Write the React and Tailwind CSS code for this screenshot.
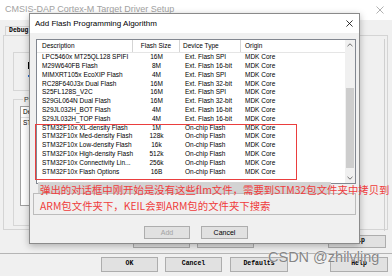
import React from 'react';

const algos = [
  ['LPC5460x MT25QL128 SPIFI', '16M', 'Ext. Flash SPI'],
  ['M29W640FB Flash', '8M', 'Ext. Flash 16-bit'],
  ['MIMXRT105x EcoXIP Flash', '4M', 'Ext. Flash SPI'],
  ['RC28F640J3x Dual Flash', '16M', 'Ext. Flash 32-bit'],
  ['S25FL128S_V2C', '16M', 'Ext. Flash SPI'],
  ['S29GL064N Dual Flash', '16M', 'Ext. Flash 32-bit'],
  ['S29JL032H_BOT Flash', '4M', 'Ext. Flash 16-bit'],
  ['S29JL032H_TOP Flash', '4M', 'Ext. Flash 16-bit'],
  ['STM32F10x XL-density Flash', '1M', 'On-chip Flash'],
  ['STM32F10x Med-density Flash', '128k', 'On-chip Flash'],
  ['STM32F10x Low-density Flash', '16k', 'On-chip Flash'],
  ['STM32F10x High-density Flash', '512k', 'On-chip Flash'],
  ['STM32F10x Connectivity Lin...', '256k', 'On-chip Flash'],
  ['STM32F10x Flash Options', '16B', 'On-chip Flash'],
];

function CloseX({ size = 8, color = '#000' }) {
  return (
    <svg width={size} height={size} viewBox="0 0 8 8">
      <path d="M0.5 0.5 L7.5 7.5 M7.5 0.5 L0.5 7.5" stroke={color} strokeWidth="0.9" fill="none" />
    </svg>
  );
}

function Chevron({ down }) {
  return (
    <svg width="6" height="4" viewBox="0 0 6 4">
      <path d={down ? 'M0.5 0.8 L3 3.2 L5.5 0.8' : 'M0.5 3.2 L3 0.8 L5.5 3.2'} stroke="#606060" strokeWidth="0.9" fill="none" />
    </svg>
  );
}

function WinButton({ w, children, muted, mono }) {
  return (
    <div
      className={`h-full ${w} shrink-0 border border-[#adadad] bg-[#e1e1e1] flex items-center justify-center leading-none ${
        mono ? "font-['Liberation_Mono',monospace] font-bold text-[6.5px]" : 'text-[7px]'
      } ${muted ? 'text-[#a3a3a3]' : 'text-black'}`}
    >
      {children}
    </div>
  );
}

// the driver setup window behind the dialog
function BackWindow() {
  return (
    <div className="h-[254px] border-b border-[#b5b5b5] flex flex-col">
      <div className="h-[20px] shrink-0 bg-white flex items-center justify-between pl-[5px] pr-[8px]">
        <span className="text-[9px] text-[#a3a3a3] whitespace-nowrap">CMSIS-DAP Cortex-M Target Driver Setup</span>
        <CloseX size={8} color="#a8a8a8" />
      </div>
      <div className="pl-[3px] pt-[6px]">
        <div className="flex h-[9px]">
          <div className="ml-[2px] w-[30px] border-t border-l border-r border-[#d4d4d4] flex items-center pl-[3px] font-['Liberation_Mono',monospace] font-bold text-[6.5px] leading-none">
            Debug
          </div>
        </div>
        <div className="w-[385px] h-[195px] border border-[#d4d4d4] pl-[9px] pt-[13px] flex">
          <div className="flex flex-col gap-[5px]">
            <fieldset className="w-[200px] h-[42px] border border-[#d6d6d6] pl-[14px] pt-[6px]">
              <legend className="ml-[3px] px-[1px] text-[7px] leading-none text-[#333]">Download Function</legend>
              <div className="w-[2px] h-[7px] bg-black" />
              <div className="w-[2px] h-[2px] bg-[#2a6fd6] mt-[6px]" />
            </fieldset>
            <fieldset className="w-[200px] h-[130px] border border-[#d6d6d6] pl-[6px] pt-[3px]">
              <legend className="ml-[3px] px-[1px] text-[7px] leading-none text-[#333]">Programming Algorithm</legend>
              <div className="w-[180px] h-[100px] border border-[#a0a0a0] bg-white">
                <div className="h-[11px] border-b border-[#e0e0e0] flex items-center pl-[2px] text-[6.5px] leading-none">
                  <span className="border-r border-[#e0e0e0] pr-[8px]">Description</span>
                </div>
                <div className="pl-[2px] pt-[2px] text-[6.5px] leading-none">STM32F10x Med-density Flash</div>
              </div>
            </fieldset>
          </div>
          <div className="ml-auto mr-[2px] mt-[-10px] w-[30px] h-[192px] border-r border-[#cfcfcf]" />
        </div>
        <div className="flex mt-[5px] h-[13px]">
          <div className="ml-[130px] flex gap-[7px] h-full">
            <WinButton w="w-[57px]" mono>OK</WinButton>
            <WinButton w="w-[57px]" mono>Cancel</WinButton>
          </div>
          <div className="ml-[74px] h-full">
            <WinButton w="w-[58px]" mono>Help</WinButton>
          </div>
        </div>
      </div>
    </div>
  );
}

function OptionsButtons() {
  return (
    <div className="flex pt-[3px] h-[18px]">
      <div className="ml-[101px] flex gap-[7px] h-[15px]">
        <WinButton w="w-[57px]" mono>OK</WinButton>
        <WinButton w="w-[57px]" mono>Cancel</WinButton>
      </div>
      <div className="ml-[8px] h-[15px]">
        <WinButton w="w-[58px]" mono>Defaults</WinButton>
      </div>
      <div className="ml-[42px] h-[15px]">
        <WinButton w="w-[58px]" mono>Help</WinButton>
      </div>
    </div>
  );
}

function FlashDialog() {
  return (
    <div className="absolute left-[29px] top-[13px] w-[331px] h-[231px] border border-[#8a8a8a] bg-[#f0f0f0] shadow-[0_2px_7px_rgba(0,0,0,0.28)] flex flex-col">
      <div className="h-[19px] shrink-0 bg-white flex items-center justify-between pl-[5px] pr-[6px]">
        <span className="text-[8px] leading-none whitespace-nowrap">Add Flash Programming Algorithm</span>
        <CloseX size={7} />
      </div>

      <div className="ml-[6px] mt-[6px] w-[320px] h-[145px] shrink-0 border border-[#828790] bg-white flex text-[6.5px] leading-none">
        <div className="flex-1 flex flex-col">
          <div className="h-[13px] flex border-b border-[#e5e5e5]">
            <div className="w-[96px] border-r border-[#d5d5d5] flex items-center pl-[5px]">Description</div>
            <div className="w-[47px] border-r border-[#d5d5d5] flex items-center justify-center">Flash Size</div>
            <div className="w-[61px] border-r border-[#d5d5d5] flex items-center pl-[3px]">Device Type</div>
            <div className="flex-1 flex items-center pl-[4px]">Origin</div>
          </div>
          {algos.map(([name, size, type]) => (
            <div key={name} className="h-[8.8px] flex items-center whitespace-nowrap">
              <div className="w-[96px] pl-[5px]">{name}</div>
              <div className="w-[47px] text-center">{size}</div>
              <div className="w-[61px] pl-[5px]">{type}</div>
              <div className="flex-1 pl-[4px]">MDK Core</div>
            </div>
          ))}
        </div>
        <div className="w-[10px] bg-[#f0f0f0] flex flex-col items-center">
          <div className="h-[10px] flex items-center">
            <Chevron />
          </div>
          <div className="h-[38px]" />
          <div className="w-[8px] h-[80px] bg-[#cdcdcd]" />
          <div className="flex-1" />
          <div className="h-[10px] flex items-center">
            <Chevron down />
          </div>
        </div>
      </div>

      <div className="ml-[3px] mt-[9px] w-[323px] h-[22px] shrink-0 border border-[#bcbcbc]" />

      <div className="ml-[114px] mt-[11px] h-[13px] flex gap-[11px]">
        <WinButton w="w-[46px]" muted>Add</WinButton>
        <WinButton w="w-[47px]">Cancel</WinButton>
      </div>
    </div>
  );
}

export default function App() {
  return (
    <div className="relative w-[392px] h-[276px] overflow-hidden bg-[#f0f0f0] font-['Liberation_Sans',sans-serif] text-black">
      <BackWindow />
      <OptionsButtons />
      <FlashDialog />

      {/* red annotation drawn over the screenshot */}
      <div className="absolute left-[35px] top-[124px] w-[262px] h-[56px] border-[1.5px] border-[#ea3e3e]" />
      <div className="absolute left-[38px] top-[182px] w-[293px] h-[11px] bg-[#d3d3d3]" />
      <div className="absolute left-[40px] top-[182px] text-[10.4px] leading-[16px] text-[#ef3b3b] whitespace-nowrap font-['Noto_Sans_CJK_SC',sans-serif]">
        <div>弹出的对话框中刚开始是没有这些flm文件，需要到STM32包文件夹中拷贝到</div>
        <div>ARM包文件夹下，KEIL会到ARM包的文件夹下搜索</div>
      </div>

      <div className="absolute left-[268px] top-[250px] text-[14.5px] leading-none text-[#858585] whitespace-nowrap [text-shadow:0_0_1px_#ffffff]">
        CSDN @zhilvling
      </div>
    </div>
  );
}
